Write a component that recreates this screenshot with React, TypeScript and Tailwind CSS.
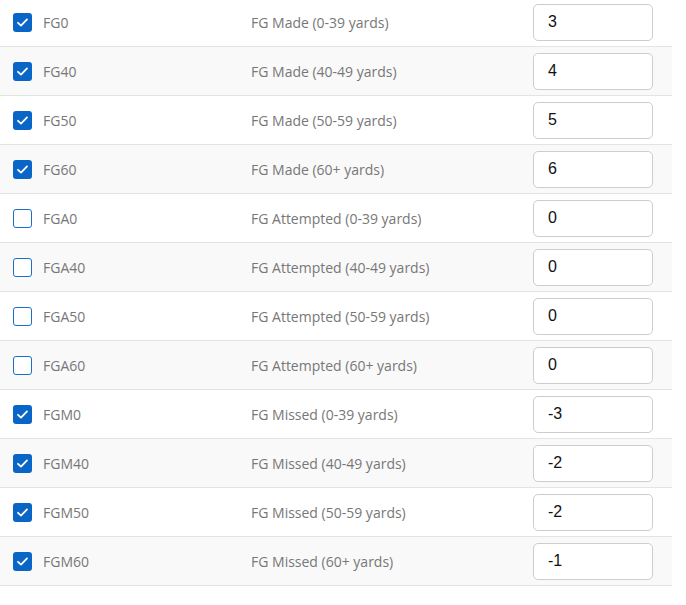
import React from "react";

const rows = [
  { k: "FG0", d: "FG Made (0-39 yards)", v: "3", c: true },
  { k: "FG40", d: "FG Made (40-49 yards)", v: "4", c: true },
  { k: "FG50", d: "FG Made (50-59 yards)", v: "5", c: true },
  { k: "FG60", d: "FG Made (60+ yards)", v: "6", c: true },
  { k: "FGA0", d: "FG Attempted (0-39 yards)", v: "0", c: false },
  { k: "FGA40", d: "FG Attempted (40-49 yards)", v: "0", c: false },
  { k: "FGA50", d: "FG Attempted (50-59 yards)", v: "0", c: false },
  { k: "FGA60", d: "FG Attempted (60+ yards)", v: "0", c: false },
  { k: "FGM0", d: "FG Missed (0-39 yards)", v: "-3", c: true },
  { k: "FGM40", d: "FG Missed (40-49 yards)", v: "-2", c: true },
  { k: "FGM50", d: "FG Missed (50-59 yards)", v: "-2", c: true },
  { k: "FGM60", d: "FG Missed (60+ yards)", v: "-1", c: true },
];

function Box({ checked }: { checked: boolean }) {
  return checked ? (
    <div className="w-[19px] h-[19px] rounded-[3px] bg-[#0a66c6] flex items-center justify-center shrink-0">
      <svg width="13" height="13" viewBox="0 0 13 13">
        <path d="M2 6.8 L5 9.6 L11 3.4" fill="none" stroke="white" strokeWidth="1.8" strokeLinecap="round" strokeLinejoin="round" />
      </svg>
    </div>
  ) : (
    <div className="w-[19px] h-[19px] rounded-[3px] bg-white border-[1.5px] border-[#1a6fc9] shrink-0" />
  );
}

export default function App() {
  return (
    <div className="w-[686px] h-[605px] bg-white overflow-hidden" style={{ fontFamily: '"Open Sans", "Noto Sans", sans-serif' }}>
      <div className="w-[672px] -mt-[2px]">
        {rows.map((r, i) => (
          <div
            key={r.k}
            className={`h-[49px] flex items-center border-b border-[#e3e3e3] ${i % 2 === 1 ? "bg-[#f9f9f9]" : "bg-white"}`}
          >
            <div className="w-[251px] flex items-center pl-[13px] shrink-0">
              <Box checked={r.c} />
              <span className="ml-[11px] text-[14px] leading-[20px] pt-[2px] text-[#777]">{r.k}</span>
            </div>
            <div className="flex-1 text-[14px] leading-[20px] pt-[2px] text-[#777]">{r.d}</div>
            <div className="w-[120px] h-[37px] mr-[19px] border border-[#cdcdcd] rounded-[5px] bg-white flex items-center pl-[14px] text-[16px] text-[#111]" style={{ fontFamily: '"Liberation Sans", Arial, sans-serif' }}>
              {r.v}
            </div>
          </div>
        ))}
      </div>
    </div>
  );
}
